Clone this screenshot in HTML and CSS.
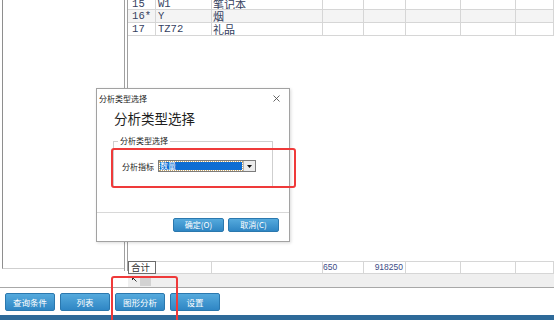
FILE: index.html
```html
<!DOCTYPE html>
<html lang="zh-CN">
  <head>
    <meta charset="UTF-8" />
    <title>分析类型选择</title>
    <link rel="stylesheet" href="styles.css">
  </head>
  <body>
    <div class="page">
      <div class="main">
        <div class="side"><div class="tree"></div></div>
        <div class="split"></div>
        <div class="grid">
          <div class="rows">
            <div class="row">
              <span class="c num">15&nbsp;</span><span class="c code">W1</span><span class="c name">笔记本</span>
              <span class="c"></span><span class="c"></span><span class="c"></span><span class="c"></span><span class="c"></span>
            </div>
            <div class="row current">
              <span class="c num">16*</span><span class="c code">Y</span><span class="c name">烟</span>
              <span class="c"></span><span class="c"></span><span class="c"></span><span class="c"></span><span class="c"></span>
            </div>
            <div class="row">
              <span class="c num">17&nbsp;</span><span class="c code">TZ72</span><span class="c name">礼品</span>
              <span class="c"></span><span class="c"></span><span class="c"></span><span class="c"></span><span class="c"></span>
            </div>
          </div>
          <div class="row total">
            <span class="c sum">合计</span><span class="c"></span><span class="c"></span>
            <span class="c qty">650</span><span class="c amount">918250</span>
            <span class="c"></span><span class="c"></span><span class="c"></span>
          </div>
          <div class="hscroll">
            <svg class="arrow" width="5" height="5" viewBox="0 0 5 5"><path d="M0.5 0.5 L4.5 4.5 M0.5 0.5 L0.5 3 M0.5 0.5 L3 0.5" stroke="#333" stroke-width="1" fill="none"/></svg>
            <span class="thumb"></span>
          </div>
        </div>
      </div>
      <div class="toolbar">
        <button class="tool">查询条件</button>
        <button class="tool">列表</button>
        <button class="tool">图形分析</button>
        <button class="tool">设置</button>
      </div>
      <div class="status"></div>
    </div>

    <div class="dialog">
      <div class="dlg-bar">
        <span>分析类型选择</span>
        <svg width="7" height="7" viewBox="0 0 7 7"><path d="M0.5 0.5 L6.5 6.5 M6.5 0.5 L0.5 6.5" stroke="#555" stroke-width="0.9" fill="none"/></svg>
      </div>
      <div class="dlg-head">分析类型选择</div>
      <fieldset class="group">
        <legend>分析类型选择</legend>
        <div class="field">
          <label>分析指标</label>
          <div class="pick">
            <span class="pick-value">数量</span>
            <span class="pick-btn"><svg width="5" height="3" viewBox="0 0 5 3"><path d="M0 0 H5 L2.5 3 Z" fill="#111"/></svg></span>
          </div>
        </div>
      </fieldset>
      <div class="dlg-foot">
        <button class="tool small">确定(O)</button>
        <button class="tool small">取消(C)</button>
      </div>
    </div>

    <div class="mark mark-group"></div>
    <div class="mark mark-btn"></div>
  </body>
</html>
```

FILE: styles.css
```css
body {
  margin: 0;
  width: 554px;
  height: 320px;
  overflow: hidden;
  position: relative;
  background-color: #fff;
  font-family: "Noto Sans CJK SC", sans-serif;
  color: #222;
}

.page {
  display: flex;
  flex-direction: column;
  height: 320px;
}

.main {
  display: flex;
  height: 288px;
  border-bottom: 1px solid #a8a8a8;
  box-sizing: border-box;
}

.side {
  width: 124px;
  flex: none;
}

.tree {
  height: 269px;
  box-sizing: border-box;
  margin-left: 2px;
  border-left: 1px solid #8e8e8e;
  border-bottom: 1px solid #cfcfcf;
}

.split {
  width: 2px;
  height: 271px;
  flex: none;
  border-left: 1px solid #a0a0a0;
  border-right: 1px solid #a0a0a0;
}

.grid {
  flex: 1;
  display: flex;
  flex-direction: column;
  min-width: 0;
}

.rows {
  flex: 1;
  margin-top: -2px;
}

.row {
  display: grid;
  grid-template-columns: 28px 56px 111px 41px 42px 55px 55px 1fr;
  height: 13px;
  box-sizing: border-box;
  border-bottom: 1px solid #d6d6d6;
}

.rows .row:first-child {
  height: 12px;
}

.row.current {
  background-color: #f4f4f4;
}

.c {
  border-right: 1px solid #d6d6d6;
  line-height: 12px;
  font-size: 10.5px;
  color: #34405e;
  white-space: nowrap;
  overflow: hidden;
}

.num {
  font-family: "Liberation Mono", monospace;
  text-align: right;
  padding-right: 4px;
}

.code {
  font-family: "Liberation Mono", monospace;
  padding-left: 2px;
}

.name {
  font-size: 11px;
  padding-left: 1px;
}

.total {
  border-top: 1px solid #d6d6d6;
  background-color: #fff;
}

.total .c {
  font-family: "Liberation Sans", sans-serif;
  font-size: 8.5px;
  line-height: 11px;
  color: #3c4c86;
}

.total .sum {
  font-family: "Noto Sans CJK SC", sans-serif;
  font-size: 9.5px;
  color: #333;
  border: 1px solid #6c6c6c;
  margin-top: -1px;
  height: 13px;
  box-sizing: border-box;
  padding-left: 2px;
  line-height: 11px;
}

.amount {
  text-align: right;
  padding-right: 2px;
}

.hscroll {
  height: 13px;
  background-color: #efefef;
  display: flex;
  align-items: center;
  padding-left: 4px;
}

.arrow {
  margin-top: -3px;
}

.thumb {
  width: 11px;
  height: 8px;
  margin-left: 3px;
  margin-top: 2px;
  background-color: #d2d2d2;
}

.toolbar {
  height: 27px;
  box-sizing: border-box;
  display: flex;
  gap: 5px;
  padding: 5px 0 0 5px;
  align-items: flex-start;
}

.tool {
  width: 50px;
  height: 18px;
  padding: 0;
  border: 1px solid #2b78ae;
  border-radius: 2px;
  background: linear-gradient(#55aadd, #2f86c4);
  color: #fff;
  font-family: "Noto Sans CJK SC", sans-serif;
  font-size: 8.5px;
  line-height: 16px;
}

.tool.small {
  width: 51px;
  height: 14px;
  line-height: 12px;
  font-size: 8px;
}

.status {
  height: 5px;
  margin-top: auto;
  background-color: #2e6a99;
}

/* dialog */
.dialog {
  position: absolute;
  left: 96px;
  top: 88px;
  width: 194px;
  height: 154px;
  box-sizing: border-box;
  border: 1px solid #a2a2a2;
  background-color: #fff;
  box-shadow: 1px 1px 3px rgba(0, 0, 0, 0.15);
  display: flex;
  flex-direction: column;
}

.dlg-bar {
  height: 18px;
  display: flex;
  align-items: center;
  justify-content: space-between;
  padding: 0 9px 0 2px;
  font-size: 8px;
  color: #222;
}

.dlg-head {
  font-size: 13.5px;
  line-height: 20px;
  margin: 1px 0 0 17px;
  color: #1e1e1e;
}

.group {
  margin: 7px 0 0 16px;
  width: 160px;
  box-sizing: border-box;
  border: 1px solid #cfcfcf;
  padding: 13px 8px 14px 8px;
}

.group legend {
  font-size: 8px;
  line-height: 12px;
  padding: 0 2px;
  margin-left: -4px;
  color: #222;
}

.field {
  display: flex;
  align-items: center;
  height: 12px;
  font-size: 8px;
}

.field label {
  width: 36px;
}

.pick {
  width: 98px;
  height: 12px;
  box-sizing: border-box;
  border: 1px solid #7c7c7c;
  display: flex;
  background-color: #fff;
}

.pick-value {
  flex: 1;
  margin: 1px;
  background-color: #0d6dd3;
  outline: 1px dotted #c9a86a;
  color: #fff;
  font-size: 8px;
  line-height: 8px;
}

.pick-btn {
  width: 11px;
  border-left: 1px solid #b4b4b4;
  background-color: #ececec;
  display: flex;
  align-items: center;
  justify-content: center;
}

.dlg-foot {
  margin-top: auto;
  height: 29px;
  box-sizing: border-box;
  border-top: 1px solid #d8d8d8;
  display: flex;
  justify-content: flex-end;
  align-items: flex-start;
  gap: 4px;
  padding: 5px 10px 0 0;
}

/* red highlight boxes */
.mark {
  position: absolute;
  box-sizing: border-box;
  border: 2px solid #ef3a3a;
  border-radius: 3px;
}

.mark-group {
  left: 111px;
  top: 148px;
  width: 185px;
  height: 40px;
}

.mark-btn {
  left: 111px;
  top: 276px;
  width: 67px;
  height: 60px;
}
```
